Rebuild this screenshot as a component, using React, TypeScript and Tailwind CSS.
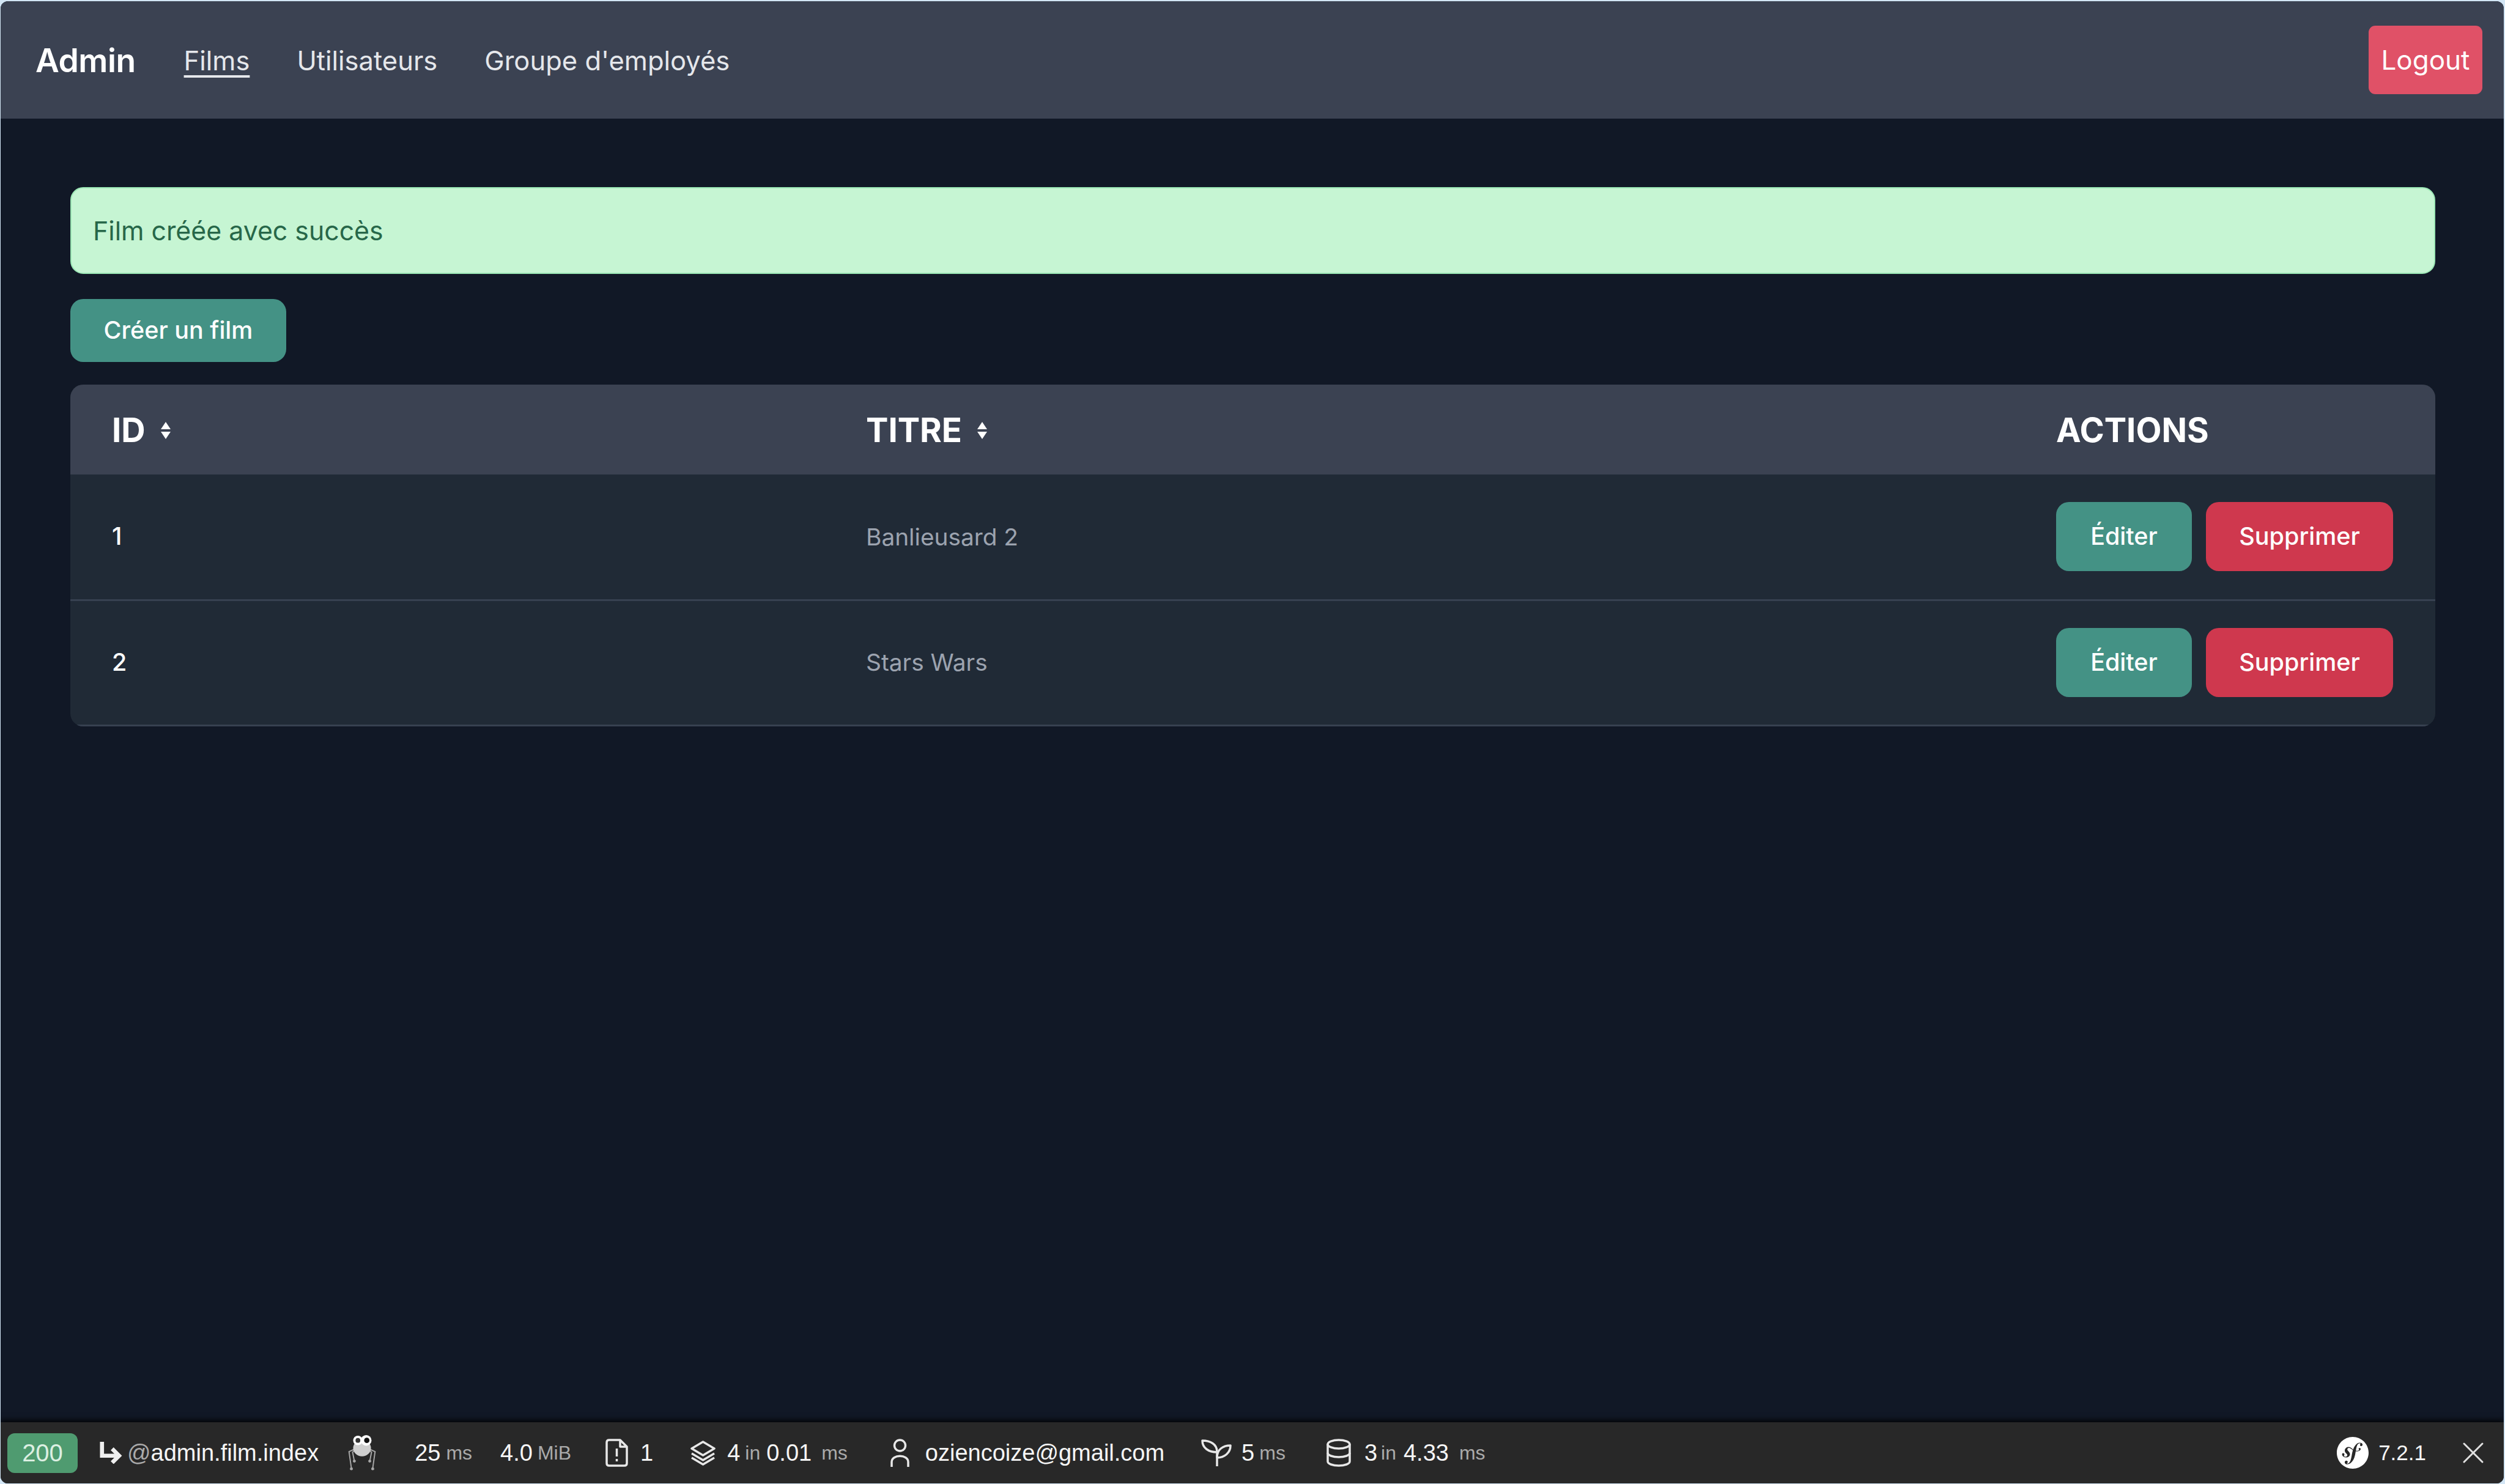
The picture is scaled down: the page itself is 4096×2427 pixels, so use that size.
import { SiSymfony } from "react-icons/si";
import { X } from "lucide-react";

function SortIcon() {
  return (
    <svg viewBox="0 0 18 28" className="ml-[24px] h-[28px] w-[18px] fill-white">
      <path d="M9 0 L17 12 H1 Z" />
      <path d="M9 28 L17 16 H1 Z" />
    </svg>
  );
}

function Spider() {
  return (
    <svg viewBox="0 0 50 64" className="ml-[46px] h-[62px] w-[50px]">
      <g fill="none" stroke="#a8a8a8" strokeWidth="2">
        <path d="M12 26 L3 30 L7 58" />
        <path d="M12 28 L9 31 L12 46" />
        <path d="M38 26 L47 30 L43 58" />
        <path d="M38 28 L41 31 L38 46" />
      </g>
      <circle cx="7" cy="59" r="2.5" fill="#a8a8a8" />
      <circle cx="43" cy="59" r="2.5" fill="#a8a8a8" />
      <circle cx="12" cy="46" r="2.5" fill="#a8a8a8" />
      <circle cx="38" cy="46" r="2.5" fill="#a8a8a8" />
      <ellipse cx="25" cy="24" rx="15" ry="14" fill="#cfcfcf" />
      <circle cx="18" cy="11" r="8" fill="#fff" />
      <circle cx="32" cy="11" r="9" fill="#fff" />
      <circle cx="18" cy="11" r="4" fill="#333" />
      <circle cx="33" cy="11" r="4.5" fill="#111" />
    </svg>
  );
}

function Small({ children, className }: { children: string; className: string }) {
  return <span className={`text-[32px] text-[#aaaaaa] ${className}`}>{children}</span>;
}

function Toolbar() {
  return (
    <footer className="relative flex h-[100px] shrink-0 items-center bg-[#282828] font-['Liberation_Sans',sans-serif] text-[38px] text-[#f5f5f5] shadow-[0_-4px_8px_rgba(0,0,0,0.8)]">
      <div className="ml-[11px] flex h-[65px] w-[115px] items-center justify-center rounded-[12px] bg-[#4f9b70] text-[40px] text-[#dcefe2]">
        200
      </div>
      <svg viewBox="0 0 39 38" className="ml-[34px] h-[36px] w-[40px]" fill="none" stroke="#f0f0f0" strokeWidth="7">
        <path d="M4.5 0 V24 H30" />
        <path d="M22 12 L34 24 L22 36" />
      </svg>
      <span className="ml-[7px] text-[#aaaaaa]">@</span>
      <span>admin.film.index</span>
      <Spider />
      <span className="ml-[61px]">25</span>
      <Small className="ml-[9px]">ms</Small>
      <span className="ml-[46px]">4.0</span>
      <Small className="ml-[8px]">MiB</Small>
      <svg viewBox="0 0 37 46" className="ml-[56px] h-[46px] w-[37px]" fill="none" stroke="#e8e8e8" strokeWidth="3.5" strokeLinejoin="round">
        <path d="M6 2 H24 L35 13 V40 Q35 44 31 44 H6 Q2 44 2 40 V6 Q2 2 6 2 Z" />
        <path d="M24 2 V13 H35" />
        <path d="M18.5 16 V29 M18.5 33 V37" />
      </svg>
      <span className="ml-[20px]">1</span>
      <svg viewBox="0 0 43 41" className="ml-[60px] h-[41px] w-[43px]" fill="none" stroke="#e8e8e8" strokeWidth="3.5" strokeLinejoin="round">
        <path d="M21.5 2 L40 13 L21.5 24 L3 13 Z" />
        <path d="M3 21 L21.5 32 L40 21" />
        <path d="M3 28 L21.5 39 L40 28" />
      </svg>
      <span className="ml-[18px]">4</span>
      <Small className="ml-[8px]">in</Small>
      <span className="ml-[10px]">0.01</span>
      <Small className="ml-[16px]">ms</Small>
      <svg viewBox="0 0 31 46" className="ml-[70px] h-[46px] w-[31px]" fill="none" stroke="#e8e8e8" strokeWidth="3.5">
        <circle cx="15.5" cy="11" r="9" />
        <path d="M2 46 V38 C2 25 29 25 29 38 V46" />
      </svg>
      <span className="ml-[26px]">oziencoize@gmail.com</span>
      <svg viewBox="0 0 50 44" className="ml-[60px] h-[44px] w-[50px]" fill="none" stroke="#e8e8e8" strokeWidth="3.5" strokeLinejoin="round">
        <path d="M26 44 V20 C26 8 15 2 2 2 C2 14 12 21 26 21" />
        <path d="M26 30 C38 30 48 22 48 10 C36 10 26 16 26 30" />
      </svg>
      <span className="ml-[16px]">5</span>
      <Small className="ml-[8px]">ms</Small>
      <svg viewBox="0 0 42 46" className="ml-[66px] h-[46px] w-[42px]" fill="none" stroke="#e8e8e8" strokeWidth="3.5">
        <ellipse cx="21" cy="9" rx="18" ry="7" />
        <path d="M3 9 V37 C3 41 11 44 21 44 C31 44 39 41 39 37 V9" />
        <path d="M3 23 C3 27 11 30 21 30 C31 30 39 27 39 23" />
      </svg>
      <span className="ml-[21px]">3</span>
      <Small className="ml-[6px]">in</Small>
      <span className="ml-[12px]">4.33</span>
      <Small className="ml-[17px]">ms</Small>
      <SiSymfony className="ml-auto h-[52px] w-[52px] text-white" />
      <span className="ml-[16px] text-[35px]">7.2.1</span>
      <X className="mr-[20px] ml-[47px] h-[60px] w-[60px] text-[#e0e0e0]" strokeWidth={1.2} />
    </footer>
  );
}

function RowButtons() {
  return (
    <div className="flex gap-[23px]">
      <button className="flex h-[113px] w-[222px] items-center justify-center rounded-[21px] bg-[#449285] font-medium text-white">
        Éditer
      </button>
      <button className="flex h-[113px] w-[306px] items-center justify-center rounded-[21px] bg-[#cf384e] font-medium text-white">
        Supprimer
      </button>
    </div>
  );
}

const films = [
  { id: 1, title: "Banlieusard 2" },
  { id: 2, title: "Stars Wars" },
];

export default function App() {
  return (
    <div className="flex h-screen w-full flex-col bg-[#d3e6f5] pt-[2px] pr-[2px] pb-[1px] pl-[1px] font-['Inter',sans-serif]">
      <div className="flex min-h-0 flex-1 flex-col overflow-hidden rounded-[12px] bg-[#111826]">
        <header className="flex h-[192px] shrink-0 items-center bg-[#3b4252] pt-[3px] pr-[35px] pl-[57px]">
          <a className="text-[53.4px] font-semibold tracking-[-0.5px] text-white">Admin</a>
          <nav className="ml-[79px] flex gap-[77px] text-[43.5px] text-[#e5e7eb]">
            <a className="underline underline-offset-[8px]">Films</a>
            <a>Utilisateurs</a>
            <a>Groupe d'employés</a>
          </nav>
          <button className="ml-auto -mt-[3px] flex h-[112px] w-[186px] items-center justify-center rounded-[11px] bg-[#e05167] text-[44px] text-white">
            Logout
          </button>
        </header>

        <main className="flex-1 pt-[112px] pr-[112px] pl-[114px]">
          <div className="flex h-[142px] items-center rounded-[21px] border-2 border-[#9ae6b4] bg-[#c6f5d3] pt-[3px] pl-[35px] text-[42.8px] text-[#276749]">
            Film créée avec succès
          </div>
          <button className="mt-[41px] flex h-[103px] w-[353px] items-center justify-center rounded-[21px] bg-[#449285] text-[39.5px] font-medium text-white">
            Créer un film
          </button>

          <div className="mt-[37px] overflow-hidden rounded-[21px] bg-[#202a36]">
            <table className="w-full table-fixed text-left">
              <thead className="bg-[#3b4252] text-[54.5px] text-white">
                <tr className="h-[147px]">
                  <th className="w-[1301px] pt-[2px] pl-[68px] font-bold">
                    <span className="flex items-center">
                      ID
                      <SortIcon />
                    </span>
                  </th>
                  <th className="w-[1946px] pt-[2px] font-bold">
                    <span className="flex items-center">
                      TITRE
                      <SortIcon />
                    </span>
                  </th>
                  <th className="pt-[2px] font-bold">ACTIONS</th>
                </tr>
              </thead>
              <tbody className="text-[39.5px]">
                {films.map((film) => (
                  <tr key={film.id} className="h-[205px] border-b-[3px] border-[#374151]">
                    <td className="pl-[68px] font-medium text-white">{film.id}</td>
                    <td className="text-[38.8px] text-[#9ca3af]">{film.title}</td>
                    <td>
                      <RowButtons />
                    </td>
                  </tr>
                ))}
              </tbody>
            </table>
          </div>
        </main>

        <Toolbar />
      </div>
    </div>
  );
}
